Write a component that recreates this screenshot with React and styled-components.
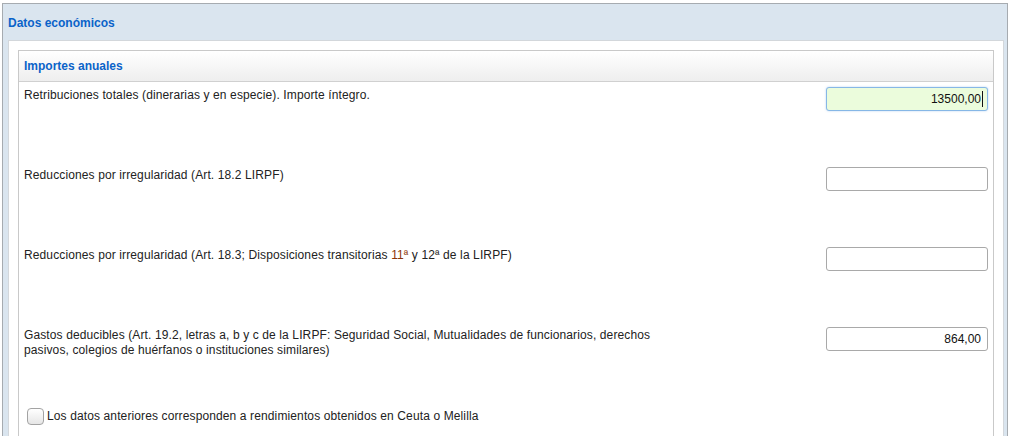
import React from "react";
import styled, { createGlobalStyle } from "styled-components";

const Global = createGlobalStyle`
  html, body { margin: 0; padding: 0; background: #ffffff; }
  body { font-family: "Liberation Sans", Arial, sans-serif; font-size: 12px; color: #222; }
  * { box-sizing: border-box; }
`;

const Outer = styled.section`
  margin: 3px 0 0 2px;
  width: 1006px;
  border: 1px solid #a6abb0;
  background: #dae5ef;
  padding-bottom: 20px;
`;

const OuterTitle = styled.h2`
  margin: 0;
  height: 36px;
  padding: 12px 0 0 5px;
  font-size: 12px;
  line-height: 15px;
  font-weight: bold;
  color: #0a63c9;
`;

const WhiteBox = styled.div`
  margin: 0 3px 0 5px;
  background: #ffffff;
  border: 1px solid #d3d7db;
  border-bottom: none;
  padding: 9px 9px 20px 9px;
`;

const Fieldset = styled.div`
  border: 1px solid #c9c9c9;
  background: #ffffff;
`;

const FieldsetHead = styled.div`
  height: 31px;
  padding: 8px 0 0 5px;
  border-bottom: 1px solid #d0d0d0;
  background: linear-gradient(#ffffff, #eeeeee);
  font-weight: bold;
  font-size: 12px;
  line-height: 15px;
  color: #0a63c9;
`;

const Row = styled.div`
  display: flex;
  align-items: flex-start;
  justify-content: space-between;
  height: 80px;
  padding: 5px 5px 0 5px;
`;

const Label = styled.div`
  width: 640px;
  padding-top: 1px;
  line-height: 15px;
  letter-spacing: 0.12px;
  color: #222;
`;

const Ord = styled.span`
  color: ${(p) => (p.$accent ? "#8c3508" : "inherit")};
`;

const InputWrap = styled.div`
  position: relative;
  width: 162px;
  height: 24px;
  flex: none;
`;

const Amount = styled.input`
  width: 100%;
  height: 100%;
  border: 1px solid ${(p) => (p.$focused ? "#86b7e6" : "#a9a9a9")};
  border-radius: 3px;
  background: ${(p) => (p.$focused ? "#ebfcdc" : "#ffffff")};
  box-shadow: ${(p) => (p.$focused ? "0 0 2px rgba(100,160,230,0.5)" : "none")};
  padding: 0 6px 0 4px;
  text-align: right;
  font-family: "Liberation Sans", Arial, sans-serif;
  font-size: 12px;
  color: #111;
  outline: none;
`;

const Caret = styled.span`
  position: absolute;
  right: 5px;
  top: 4px;
  width: 1px;
  height: 16px;
  background: #111;
`;

const CheckRow = styled.label`
  display: flex;
  height: 60px;
  padding: 6px 5px 0 8px;
  align-items: flex-start;
  color: #222;
  line-height: 17px;
  letter-spacing: 0.12px;
`;

const Box = styled.span`
  display: inline-block;
  width: 17px;
  height: 17px;
  margin-right: 3px;
  border: 1px solid #a3a3a3;
  border-radius: 4px;
  background: linear-gradient(#ffffff, #e6e6e6);
  flex: none;
`;

const rows = [
  { label: "Retribuciones totales (dinerarias y en especie). Importe íntegro.", value: "13500,00", focused: true },
  { label: "Reducciones por irregularidad (Art. 18.2 LIRPF)", value: "" },
  {
    label: (
      <>
        Reducciones por irregularidad (Art. 18.3; Disposiciones transitorias{" "}
        <Ord $accent>11ª</Ord> y <Ord>12ª</Ord> de la LIRPF)
      </>
    ),
    value: "",
  },
  {
    label:
      "Gastos deducibles (Art. 19.2, letras a, b y c de la LIRPF: Seguridad Social, Mutualidades de funcionarios, derechos pasivos, colegios de huérfanos o instituciones similares)",
    value: "864,00",
  },
];

export default function App() {
  return (
    <>
      <Global />
      <Outer>
        <OuterTitle>Datos económicos</OuterTitle>
        <WhiteBox>
          <Fieldset>
            <FieldsetHead>Importes anuales</FieldsetHead>
            {rows.map((r, i) => (
              <Row key={i}>
                <Label>{r.label}</Label>
                <InputWrap>
                  <Amount readOnly defaultValue={r.value} $focused={r.focused} />
                  {r.focused && <Caret />}
                </InputWrap>
              </Row>
            ))}
            <CheckRow>
              <Box />
              Los datos anteriores corresponden a rendimientos obtenidos en Ceuta o Melilla
            </CheckRow>
          </Fieldset>
        </WhiteBox>
      </Outer>
    </>
  );
}
